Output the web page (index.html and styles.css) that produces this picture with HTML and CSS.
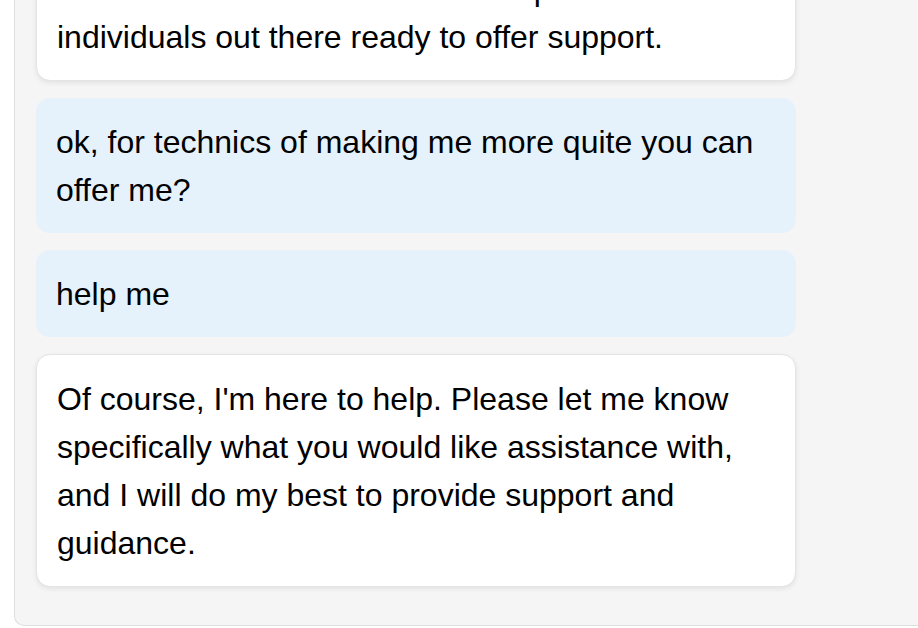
FILE: index.html
```html
<!DOCTYPE html>
<html lang="en">
<head>
<meta charset="utf-8">
<title>Chat</title>
<link rel="stylesheet" href="styles.css">
</head>
<body>
<div class="chat">
  <div class="msg bot">I'm really sorry that you're feeling this way. Please consider reaching out to a mental health professional or someone you trust. You are not alone and there are kind and compassionate individuals out there ready to offer support.</div>
  <div class="msg user">ok, for technics of making me more quite you can offer me?</div>
  <div class="msg user">help me</div>
  <div class="msg bot">Of course, I'm here to help. Please let me know specifically what you would like assistance with, and I will do my best to provide support and guidance.</div>
</div>
</body>
</html>
```
FILE: styles.css
```css
html, body {
  margin: 0;
  padding: 0;
  background: #ffffff;
}
body {
  height: 100vh;
  overflow: hidden;
  display: flex;
  flex-direction: column;
  justify-content: flex-end;
  font-family: "Liberation Sans", Arial, sans-serif;
}
.chat {
  flex: none;
  margin: 0 0 2px 14px;
  padding: 0 0 38px 21px;
  background: #f5f5f5;
  border: 1px solid #dedede;
  border-right: none;
  border-radius: 10px 0 0 10px;
  display: flex;
  flex-direction: column;
  gap: 17px;
}
.msg {
  width: 760px;
  box-sizing: border-box;
  padding: 19.5px 20px;
  font-size: 32px;
  line-height: 48px;
  color: #000;
  border-radius: 14px;
}
.bot {
  background: #ffffff;
  border: 1px solid #e4e4e4;
  box-shadow: 0 2px 5px rgba(0, 0, 0, 0.08);
}
.user {
  background: #e5f1fb;
}
```
